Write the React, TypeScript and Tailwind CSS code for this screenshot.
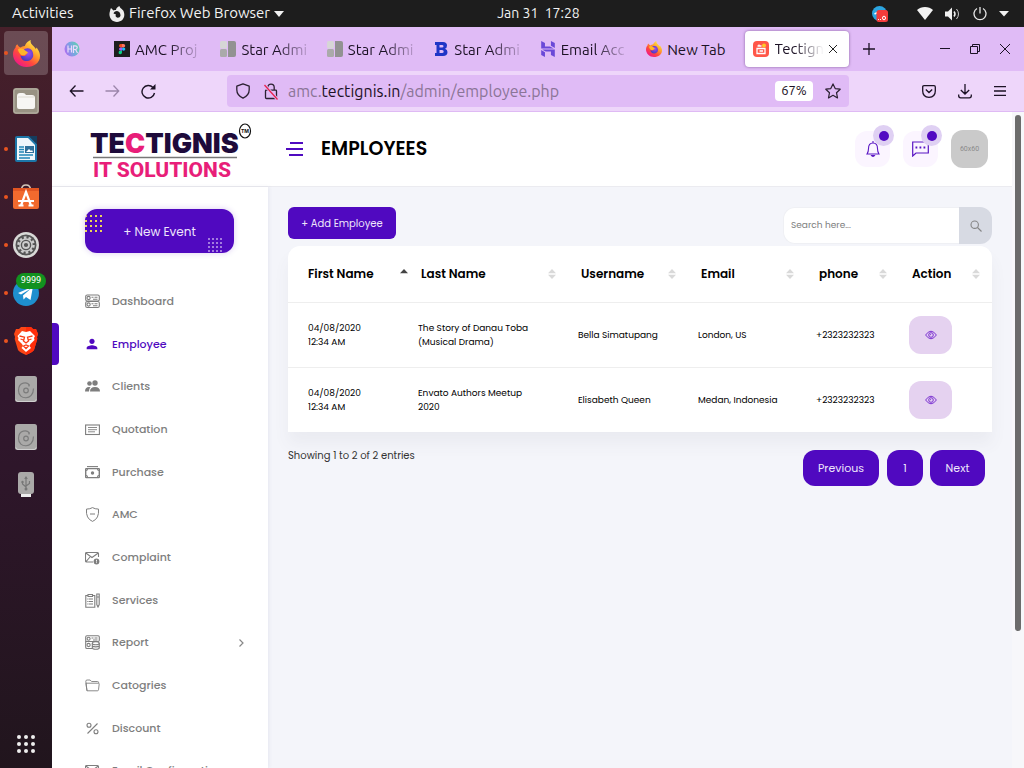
import type { ReactNode } from "react";
import { MdPerson } from "react-icons/md";
import { SiHostinger } from "react-icons/si";

const chromeFont = "font-['Ubuntu','Noto_Sans',sans-serif]";

function FirefoxLogo({ className }: { className: string }) {
  return (
    <svg viewBox="0 0 32 32" className={className} aria-hidden="true">
      <defs>
        <linearGradient id="ff-body" x1="0.85" y1="0.1" x2="0.2" y2="0.95">
          <stop offset="0" stopColor="#fff04a" />
          <stop offset="0.35" stopColor="#ffa02c" />
          <stop offset="0.65" stopColor="#ff4a3d" />
          <stop offset="1" stopColor="#f0158c" />
        </linearGradient>
        <radialGradient id="ff-core" cx="0.6" cy="0.4" r="0.6">
          <stop offset="0" stopColor="#a04df0" />
          <stop offset="1" stopColor="#4b3cc0" />
        </radialGradient>
      </defs>
      <path d="M5 5C6 7 7 8 9 9c1-1 3-2 5-2 1-3 4-6 7-7-1 3 1 5 4 8 1 1 2 2 2 3l1-2c3 4 4 7 4 10 0 8-7 13-16 13S0 25 0 17c0-3 1-6 3-8 0-2 1-3 2-4z" fill="url(#ff-body)" />
      <path d="M16 10c5-1 8 3 8 8 0 4-4 7-8 7s-7-3-7-7c3 2 6 1 8-2-2-1-4-1-6-3 1-2 3-3 5-3z" fill="url(#ff-core)" />
      <path d="M6 11c3-2 6-1 8 1 2 1 3 2 4 3-3 1-3 4-8 3-2-2-4-4-4-7z" fill="#ffb52b" />
    </svg>
  );
}

function FirefoxMono() {
  return (
    <svg viewBox="0 0 16 16" className="size-4" aria-hidden="true">
      <path fill="#eee" fillRule="evenodd" d="M2 2l2.500 2.500C5.500 4 6 4 7 4c0-1.500 1.500-3.500 3.500-4 0 2 3 3 4 5 2.500 6-1 11-6.500 11S-1 11 1 5c.2-1 .5-2 1-3zM8 5C6 5 5 6 4.500 7.500L7 8.500C5 12 11 13 11.500 9.500 11.700 7.500 10 5 8 5z" />
    </svg>
  );
}

function TopBar() {
  return (
    <header className="grid h-[27px] shrink-0 grid-cols-[1fr_auto_1fr] items-center bg-[#1d1d1d] text-[15px] text-[#f2f2f2]">
      <div className="flex items-center pl-3">
        <button className="w-[97px] text-left">Activities</button>
        <button className="flex items-center gap-1">
          <FirefoxMono />
          Firefox Web Browser
          <svg viewBox="0 0 10 6" className="h-[6px] w-[10px]" aria-hidden="true"><path d="M0 0h10L5 6z" fill="#f2f2f2" /></svg>
        </button>
      </div>
      <time className="pl-[53px] text-[14px] whitespace-pre">Jan 31  17:28</time>
      <div className="flex items-center justify-end pr-[15px]">
        <svg viewBox="0 0 16 16" className="mr-[29px] size-4" aria-hidden="true">
          <circle cx="7.500" cy="7.500" r="7.500" fill="#2ca5e0" />
          <path d="M2.500 8l3-1.500" stroke="#fff" strokeWidth="1.500" />
          <rect x="4.500" y="4" width="11.500" height="12" rx="2.500" fill="#f33b3b" />
          <path d="M6 13.500h1m1 0h1" stroke="#fff" />
          <ellipse cx="12" cy="12" rx="1.500" ry="1.800" fill="none" stroke="#fff" />
        </svg>
        <svg viewBox="0 0 16 13" className="mr-3 h-[13px] w-4" aria-hidden="true"><path d="M8 13L0 3C4-1 12-1 16 3z" fill="#f2f2f2" /></svg>
        <svg viewBox="0 0 16 14" className="mr-3 h-[14px] w-4" fill="none" stroke="#f2f2f2" aria-hidden="true">
          <path d="M0 4.500h3L7 .5v13l-4-4H0z" fill="#f2f2f2" stroke="none" />
          <path d="M9 4.500q2 2.500 0 5" strokeWidth="1.500" />
          <path d="M11.500 2q4 5 0 10" stroke="#ccc" />
        </svg>
        <svg viewBox="0 0 14 14" className="mr-3 size-[14px]" fill="none" stroke="#e8e8e8" strokeWidth="1.300" aria-hidden="true">
          <path d="M7 0v6.500M4 1.500a6 6 0 1 0 6 0" />
        </svg>
        <svg viewBox="0 0 10 6" className="h-[6px] w-[10px]" aria-hidden="true"><path d="M0 0h10L5 5.500z" fill="#f2f2f2" /></svg>
      </div>
    </header>
  );
}

function DriveIcon() {
  return (
    <svg viewBox="0 0 22 26" className="h-[26px] w-[22px]" aria-hidden="true">
      <rect width="22" height="26" rx="2.500" fill="#aaa9a8" />
      <path d="M1 23.500q0 2 2 2h16q2 0 2-2" stroke="#d0d0d0" fill="none" />
      <g fill="none" stroke="#7c7c7c" strokeWidth="1.200">
        <path d="M18.500 12.500c0 12-15 12-15 2 0-9 9-9 11-5" />
        <path d="M14 10.500v-2" />
        <circle cx="11" cy="14.500" r="2.300" />
      </g>
    </svg>
  );
}

const dock: { name: string; running?: boolean; active?: boolean; badge?: string; icon: ReactNode }[] = [
  { name: "Firefox", running: true, active: true, icon: <FirefoxLogo className="size-[27px]" /> },
  {
    name: "Files",
    icon: (
      <svg viewBox="0 0 26 26" className="size-[26px]" aria-hidden="true">
        <rect width="26" height="26" rx="3" fill="#989283" />
        <rect x="1" y="1" width="24" height="24" rx="2" fill="none" stroke="#bab5a8" />
        <path d="M4 8q0-3 3-3h3q2 0 3 2h6q3 0 3 3v9q0 2-2 2H6q-2 0-2-2z" fill="#f7f6f3" />
        <path d="M5 9h16" stroke="#dedbd2" />
      </svg>
    ),
  },
  {
    name: "Writer",
    running: true,
    icon: (
      <svg viewBox="0 0 22 26" className="h-[26px] w-[22px]" aria-hidden="true">
        <path d="M2 0h12l8 8v16q0 2-2 2H2q-2 0-2-2V2q0-2 2-2z" fill="#1c76a8" />
        <path d="M14 0h8v8z" fill="#153d5e" />
        <path d="M2 2h11l7 7v15H2z" fill="#eef6fb" />
        <path d="M4 11h5M4 13.500h5M4 16h5M4 19h14M4 22h11" stroke="#2087b8" strokeWidth="1.400" />
        <path d="M10 10h9v7h-9z" fill="#2e6f9a" />
        <path d="M11 16l3-3 2 2 1-1 1 2z" fill="#fff" />
      </svg>
    ),
  },
  {
    name: "Software",
    running: true,
    icon: (
      <svg viewBox="0 0 26 26" className="size-[26px]" aria-hidden="true">
        <path d="M8.500 6q0-5 4.500-5t4.500 5" fill="none" stroke="#d4c8bb" strokeWidth="1.500" />
        <path d="M0 4h26v19q0 2-2 2H2q-2 0-2-2z" fill="#f26a2e" />
        <path d="M0 4h26v3H0z" fill="#e15522" />
        <path d="M8 21.500L13 8l5 13.500M5 17h16M5.500 21.500h5M15.500 21.500h5" fill="none" stroke="#fff" strokeWidth="2.200" />
      </svg>
    ),
  },
  {
    name: "Settings",
    running: true,
    icon: (
      <svg viewBox="0 0 26 26" className="size-[26px]" fill="none" aria-hidden="true">
        <circle cx="13" cy="13" r="13" fill="#d9d9d7" />
        <circle cx="13" cy="13" r="10.500" fill="#555" />
        <circle cx="13" cy="13" r="7.500" stroke="#ccc" strokeWidth="2.500" strokeDasharray="2.600 2.110" />
        <circle cx="13" cy="13" r="6" stroke="#ccc" strokeWidth="1.500" />
        <circle cx="13" cy="13" r="3" stroke="#ccc" strokeWidth="1.800" />
      </svg>
    ),
  },
  {
    name: "Telegram",
    running: true,
    badge: "9999",
    icon: (
      <svg viewBox="0 0 26 26" className="size-[26px]" aria-hidden="true">
        <circle cx="13" cy="13" r="13" fill="#1e8fce" />
        <path d="M5 13L20 6.500 17.500 20l-4.500-3-2.500 2.500-.5-4 8-7-10 6z" fill="#fff" />
      </svg>
    ),
  },
  {
    name: "Brave",
    running: true,
    icon: (
      <svg viewBox="0 0 24 28" className="h-[28px] w-[24px]" aria-hidden="true">
        <path d="M7 0h10l2 2h3l2 5-1 3 .3 2L20 23q-1 2-8 5-7-3-8-5L.7 12 1 10 0 7l2-5h3z" fill="#fa4616" />
        <path d="M12 0h5l2 2h3l2 5-1 3 .3 2L20 23q-1 2-8 5z" fill="#ff2d0b" />
        <path d="M8 4l4 1 4-1 5 5-1 2 .5 2-4 4-1 2 1.500 2L12 25l-4.500-4L9 19l-1-2-4-4 .5-2L3.500 9z" fill="#fff" />
        <path d="M5.500 9l5 1.200L9.500 14 12 16l2.500-2-1-3.800 5-1.200M6.500 12l3 1m8-1l-3 1M9.500 19l2.500-1 2.500 1-2.500 2.500z" fill="none" stroke="#fa3c14" strokeWidth="1.300" />
      </svg>
    ),
  },
  { name: "Disk 1", icon: <DriveIcon /> },
  { name: "Disk 2", icon: <DriveIcon /> },
  {
    name: "USB drive",
    icon: (
      <svg viewBox="0 0 16 26" className="h-[26px] w-4" aria-hidden="true">
        <path d="M3 20h10v5H3z" fill="#eee" />
        <rect width="16" height="22" rx="3" fill="#aaa9a8" />
        <g fill="none" stroke="#777" strokeWidth="1.200"><path d="M8 5v13M4.500 10v2L8 15M11.500 9v2.500L8 14" /></g>
        <path d="M6.200 7L8 4l1.800 3z" fill="#777" />
        <circle cx="8" cy="17" r="1.500" fill="#777" /><circle cx="4.500" cy="10" r="1.200" fill="#777" />
      </svg>
    ),
  },
];

function Dock() {
  return (
    <nav aria-label="Dock" className="flex w-[52px] shrink-0 flex-col bg-linear-to-b from-[#47202a] via-[#31162d] to-[#21151d] pt-0.5">
      {dock.map((d) => (
        <button key={d.name} aria-label={d.name} className="relative flex h-12 w-full shrink-0 items-center justify-center">
          {d.active && <span className="absolute inset-x-1 inset-y-0.5 rounded bg-white/20" />}
          {d.running && <span className="absolute left-1 size-1 rounded-full bg-[#e95420]" />}
          <span className="relative">{d.icon}</span>
          {d.badge && (
            <span className="absolute top-1 left-4 flex h-4 w-[30px] items-center justify-center rounded-full bg-[#12921f] font-['DejaVu_Sans',sans-serif] text-[8px] text-white">
              {d.badge}
            </span>
          )}
        </button>
      ))}
      <button aria-label="Show applications" className="mx-auto mt-auto mb-[15px]">
        <svg viewBox="0 0 18 18" className="size-[18px]" fill="#eee" aria-hidden="true">
          {[2, 9, 16].map((y) => [2, 9, 16].map((x) => <circle key={`${x}-${y}`} cx={x} cy={y} r="2" />))}
        </svg>
      </button>
    </nav>
  );
}

const grayBlocks = (
  <svg viewBox="0 0 16 16" className="size-4" aria-hidden="true">
    <rect width="7" height="7.500" rx="1.500" fill="#d6d6d6" /><rect y="8" width="7" height="8" rx="1.500" fill="#aaa" />
    <path d="M8 0h6q2 0 2 2v12q0 2-2 2H8z" fill="#929292" />
  </svg>
);

const tabs: { label: string; fades?: boolean; icon: ReactNode }[] = [
  {
    label: "AMC Proj",
    fades: true,
    icon: (
      <svg viewBox="0 0 16 16" className="size-4" aria-hidden="true">
        <path d="M0 0h16v16H0z" fill="#1e1e1e" />
        <path d="M8 3H6.700a1.700 1.700 0 0 0 0 3.400H8z" fill="#f24e1e" /><path d="M8 3h1.500a1.700 1.700 0 0 1 0 3.400H8z" fill="#ff7262" />
        <path d="M8 6.400H6.700a1.700 1.700 0 0 0 0 3.400H8z" fill="#a259ff" /><circle cx="9.600" cy="8.100" r="1.700" fill="#1abcfe" />
        <path d="M8 9.800H6.700a1.700 1.700 0 1 0 1.300 1.700z" fill="#0acf83" />
      </svg>
    ),
  },
  { label: "Star Admi", fades: true, icon: grayBlocks },
  { label: "Star Admi", fades: true, icon: grayBlocks },
  {
    label: "Star Admi",
    fades: true,
    icon: (
      <svg viewBox="0 0 16 16" className="size-4" aria-hidden="true">
        <path fillRule="evenodd" fill="#1f35c7" d="M2 1h8q4 0 4 3.500 0 2.500-2 3.200 2.500.8 2.500 3.300 0 4-4.500 4H2v-3h1.500V4H2zM6.500 4v2.500H9q1.500 0 1.500-1.200T9 4zm0 5v3H9q1.700 0 1.700-1.500T9 9z" />
      </svg>
    ),
  },
  { label: "Email Acc", fades: true, icon: <SiHostinger className="size-4 text-[#6a49d8]" /> },
  { label: "New Tab", icon: <FirefoxLogo className="size-4" /> },
];

function TabStrip() {
  return (
    <div className="flex h-11 shrink-0 items-center bg-[#e0bbf6] text-[15px] text-[#1c1225]">
      <button aria-label="Pinned tab" className="flex w-[52px] pl-3">
        <svg viewBox="0 0 16 16" className="size-4 opacity-70" aria-hidden="true">
          <defs><linearGradient id="hr" x1="0" y1="0.700" x2="1" y2="0.300"><stop offset="0" stopColor="#9a4cf0" /><stop offset="0.500" stopColor="#4d9fd8" /><stop offset="1" stopColor="#2bdc90" /></linearGradient></defs>
          <circle cx="8" cy="8" r="7.500" fill="url(#hr)" />
          <path d="M4 4.500v7M7.500 4.500v7M4 8h3.500M9.500 12V4.800h1.700q2 0 2 1.800t-2 1.900H9.500m2 0l2 3.500" fill="none" stroke="#f4e6ff" strokeWidth="1.200" />
        </svg>
      </button>
      <div role="tablist" className="grid min-w-0 flex-1 grid-cols-7 self-stretch">
        {tabs.map((t, i) => (
          <button key={i} role="tab" aria-selected={false} className="flex min-w-0 items-center gap-[5px] pt-0.5 pl-2.5">
            <span className="shrink-0 pb-0.5">{t.icon}</span>
            <span className={t.fades ? "whitespace-nowrap mask-r-from-55% mask-r-to-110%" : "whitespace-nowrap"}>{t.label}</span>
          </button>
        ))}
        <div className="flex min-w-0 py-1 pl-0.5">
          <div role="tab" aria-selected className="flex min-w-0 flex-1 items-center rounded bg-white pr-3 pl-2 shadow-[0_0_3px_rgba(60,20,90,.55)]">
            <svg viewBox="0 0 16 16" className="mr-1.5 size-4 shrink-0" aria-hidden="true">
              <rect width="16" height="16" rx="4" fill="#ff5748" />
              <path d="M4.500 5h4M4 7.500h8v5H4zM6 3.500v2M6.500 10H10" fill="none" stroke="#fff" strokeWidth="1.300" />
              <circle cx="11" cy="4.500" r="2" fill="#ffc928" />
            </svg>
            <span className="flex-1 whitespace-nowrap"><span className="mask-r-from-40%">Tectign</span></span>
            <button aria-label="Close tab">
              <svg viewBox="0 0 8 8" className="size-2" stroke="#222" aria-hidden="true"><path d="M0 0l8 8M8 0L0 8" /></svg>
            </button>
          </div>
        </div>
      </div>
      <div className="flex w-[175px] shrink-0 items-center justify-between px-[14px]">
        <button aria-label="New tab"><svg viewBox="0 0 12 12" className="size-3" stroke="#1c1225" strokeWidth="1.300" aria-hidden="true"><path d="M6 0v12M0 6h12" /></svg></button>
        <div className="flex items-center gap-5">
          <button aria-label="Minimize"><svg viewBox="0 0 10 10" className="size-2.5" stroke="#1c1225" aria-hidden="true"><path d="M0 4.500h10" /></svg></button>
          <button aria-label="Restore"><svg viewBox="0 0 10 10" className="size-2.5" stroke="#1c1225" fill="none" aria-hidden="true"><path d="M.5 2.500h7v7h-7zM2.500 2.500v-2h7v7h-2" /></svg></button>
          <button aria-label="Close window"><svg viewBox="0 0 10 10" className="size-2.5" stroke="#1c1225" aria-hidden="true"><path d="M0 0l10 10M10 0L0 10" /></svg></button>
        </div>
      </div>
    </div>
  );
}

function AddressBar() {
  return (
    <div className="flex h-[41px] shrink-0 items-center border-b border-[#dfbaf4] bg-[#eed6fa] text-[#1c1225]">
      <div className="flex w-[175px] shrink-0 items-center gap-[21px] pl-[17px]">
        <button aria-label="Back"><svg viewBox="0 0 14 12" className="h-3 w-[15px]" fill="none" stroke="#1c1225" strokeWidth="1.300" aria-hidden="true"><path d="M14 6H1M6 .5L.8 6 6 11.500" /></svg></button>
        <button aria-label="Forward"><svg viewBox="0 0 14 12" className="h-3 w-[15px]" fill="none" stroke="#9c86ab" strokeWidth="1.300" aria-hidden="true"><path d="M0 6h13M8 .5L13.200 6 8 11.500" /></svg></button>
        <button aria-label="Reload"><svg viewBox="0 0 15 15" className="size-[15px]" fill="none" stroke="#1c1225" strokeWidth="1.400" aria-hidden="true"><path d="M13.500 9A6.300 6.300 0 1 1 12 3.500" /><path d="M14.500 0v5.500H9z" fill="#1c1225" stroke="none" /></svg></button>
      </div>
      <div className="flex h-8 min-w-0 flex-1 items-center rounded bg-[#e0bbf6] pr-2 pl-[9px]">
        <svg viewBox="0 0 14 16" className="h-4 w-[14px] shrink-0" fill="none" stroke="#2b2031" strokeWidth="1.300" aria-hidden="true"><path d="M7 .8l6.200 2.400v3.600c0 4-2.700 6.800-6.200 8.400C3.500 13.600.8 10.800.8 6.800V3.200z" strokeLinejoin="round" /></svg>
        <svg viewBox="0 0 14 17" className="mx-[14px] mr-2.5 h-[17px] w-[14px] shrink-0" fill="none" aria-hidden="true">
          <path d="M1.500 8q0-.8.8-.8h9.400q.8 0 .8.8v6.500q0 1-1 1h-9q-1 0-1-1zM3.800 7V4.300a3.200 3.200 0 0 1 6.400 0V7" stroke="#2b2031" strokeWidth="1.300" />
          <path d="M.5 2l13 14.500" stroke="#e0bbf6" strokeWidth="3" /><path d="M.5 2l13 14.500" stroke="#e8234f" strokeWidth="1.300" />
        </svg>
        <div className="min-w-0 flex-1 overflow-hidden text-[16px] whitespace-nowrap text-[#8b7597]">amc.<span className="text-[#1c1225]">tectignis.in</span>/admin/employee.php</div>
        <button className="h-5 w-[38px] rounded-sm bg-white text-[13px]">67%</button>
        <button aria-label="Bookmark" className="ml-3"><svg viewBox="0 0 16 16" className="size-4" fill="none" stroke="#2b2031" strokeWidth="1.200" strokeLinejoin="round" aria-hidden="true"><path d="M8 .9l2.200 4.700 5 .6-3.700 3.500 1 5.200L8 12.300l-4.500 2.600 1-5.200L.8 6.200l5-.6z" /></svg></button>
      </div>
      <div className="flex w-[175px] shrink-0 items-center justify-end gap-[22px] pr-[18px]">
        <button aria-label="Pocket"><svg viewBox="0 0 14 13" className="h-[13px] w-[14px]" fill="none" stroke="#1c1225" strokeWidth="1.300" aria-hidden="true"><path d="M2 .7h10q1.300 0 1.300 1.300v4q0 6-6.300 6.300Q.7 12 .7 6V2Q.7.7 2 .7zM3.800 4.500L7 7.500l3.200-3" /></svg></button>
        <button aria-label="Downloads"><svg viewBox="0 0 14 16" className="h-4 w-[14px]" fill="none" stroke="#1c1225" strokeWidth="1.300" aria-hidden="true"><path d="M7 1v10M2.800 7L7 11l4.200-4M.7 11.500v1.300q0 2 2 2h8.600q2 0 2-2v-1.300" /></svg></button>
        <button aria-label="Menu"><svg viewBox="0 0 12 10" className="h-[10px] w-3" stroke="#1c1225" strokeWidth="1.300" aria-hidden="true"><path d="M0 .7h12M0 5h12M0 9.300h12" /></svg></button>
      </div>
    </div>
  );
}

function Logo() {
  return (
    <svg viewBox="0 0 164 68" className="h-[68px] w-[164px]" role="img" aria-label="Tectignis IT Solutions">
      <text x="0" y="38" fontFamily="Inter, sans-serif" fontWeight="900" fontSize="27" fill="#1e0b3b">TE<tspan fill="#e81e79">C</tspan>TIGNIS</text>
      <path d="M3 42.500h144" stroke="#777" strokeWidth="1.500" />
      <text x="3" y="62" fontFamily="Roboto, sans-serif" fontWeight="800" fontSize="21" fill="#e81e79">IT SOLUTIONS</text>
      <ellipse cx="155" cy="16" rx="5.500" ry="7" fill="none" stroke="#111" strokeWidth="1.200" />
      <text x="155" y="18" textAnchor="middle" fontFamily="Inter, sans-serif" fontWeight="700" fontSize="5" fill="#111">TM</text>
    </svg>
  );
}

function PageHeader() {
  return (
    <header className="flex h-[75px] shrink-0 items-center border-b border-[#ebebf0] bg-white">
      <a href="#home" className="flex w-[234px] shrink-0 pl-[38px]"><Logo /></a>
      <button aria-label="Toggle sidebar"><svg viewBox="0 0 18 16" className="h-4 w-[18px]" stroke="#4f0ac0" strokeWidth="2" aria-hidden="true"><path d="M4 2h13M0 8h17M3 14h14" /></svg></button>
      <h1 className="ml-[17px] flex-1 text-[19px] font-semibold text-black">EMPLOYEES</h1>
      <div className="flex items-center gap-[13px] pr-6">
        <button aria-label="Notifications" className="relative flex h-9 w-[35px] items-center justify-center rounded-xl bg-[#fbf5ff]">
          <svg viewBox="0 0 14 16" className="h-4 w-[14px]" fill="none" stroke="#5a16c4" strokeWidth="1.100" aria-hidden="true"><path d="M7 0v1.500M1 13q1.500-2 1.500-5.500Q2.500 2 7 2t4.500 5.500Q11.500 11 13 13z" /><path d="M4.500 14h5q-2.500 4-5 0z" fill="#5a16c4" stroke="none" /></svg>
          <span className="absolute -top-1.5 -right-1 flex size-[21px] items-center justify-center rounded-full bg-[#dfd0f3]"><span className="size-2.5 rounded-full bg-[#5209c2]" /></span>
        </button>
        <button aria-label="Messages" className="relative flex h-9 w-[35px] items-center justify-center rounded-xl bg-[#fbf5ff]">
          <svg viewBox="0 0 17 16" className="h-4 w-[17px]" fill="none" stroke="#5a16c4" strokeWidth="1.200" aria-hidden="true"><path d="M.7 15V1h15.600v11H4z" /><path d="M3.500 6.500h1.800m2.200 0h1.800m2.200 0h1.800" strokeWidth="1.800" /></svg>
          <span className="absolute -top-1.5 -right-1 flex size-[21px] items-center justify-center rounded-full bg-[#dfd0f3]"><span className="size-2.5 rounded-full bg-[#5209c2]" /></span>
        </button>
        <button className="h-[38px] w-[37px] rounded-xl bg-[#cacaca] font-['Roboto',sans-serif] text-[7px] text-[#8a8a8a]">60x60</button>
      </div>
    </header>
  );
}

function Stroke({ children }: { children: ReactNode }) {
  return <svg viewBox="0 0 15 15" className="size-[15px]" fill="none" stroke="currentColor" strokeWidth="1.100" aria-hidden="true">{children}</svg>;
}

const envelope = <Stroke><path d="M13.500 7V3.500q0-1-1-1H1.500q-1 0-1 1V11q0 1 1 1H8M.8 3l6.200 4.500L13.300 3M.8 11.800L5 7" /><circle cx="11.500" cy="11.500" r="2.900" fill="currentColor" stroke="none" /><path d="M11.500 9.800v1.800m0 .7v.8" stroke="#fff" strokeWidth="0.900" /></Stroke>;

const menu: { label: string; icon: ReactNode; arrow?: boolean }[] = [
  { label: "Dashboard", icon: <Stroke><rect x="0.700" y="1" width="13.600" height="6" rx="1.500" /><rect x="0.700" y="7.500" width="13.600" height="6" rx="1.500" /><circle cx="3.600" cy="4" r="1.600" /><circle cx="3.600" cy="10.500" r="1.600" /><path d="M6.500 3.200h2m1 0h3M8 5.200h4.500M6.500 9.700h2m1 0h3M8 11.700h4.500" /></Stroke> },
  { label: "Employee", icon: <MdPerson className="size-4" /> },
  { label: "Clients", icon: <Stroke><g fill="currentColor" stroke="none"><circle cx="4.500" cy="4.500" r="2.300" /><circle cx="10" cy="4" r="2.700" /><path d="M0 12.500q0-4.500 4-4.500l1.500.3Q4 9.500 4 12.500zM5 12.500Q5 8 10 8t5 4.500z" /></g></Stroke> },
  { label: "Quotation", icon: <Stroke><rect x="0.600" y="3" width="13.800" height="9.500" /><path d="M3 5.500h9M3 7.700h9M3 9.800h7" strokeWidth="0.900" /></Stroke> },
  { label: "Purchase", icon: <Stroke><rect x="0.700" y="3.600" width="13.600" height="9" rx="0.500" strokeWidth="1.400" /><path d="M2 1.600h11" /><circle cx="7.500" cy="8" r="1.700" fill="currentColor" stroke="none" /><path d="M1 5.500q1.500 0 1.500-1.500M1 10.500q1.500 0 1.500 1.500M14 5.500q-1.500 0-1.500-1.500M14 10.500q-1.500 0-1.500 1.500" /></Stroke> },
  { label: "AMC", icon: <Stroke><path d="M7.500 .6q2.500 1.500 6 1.500.9 9.500-6 12.300Q.6 11.500 1.500 2.100 5 2.100 7.500.6zM5 7h5" strokeWidth="1" /></Stroke> },
  { label: "Complaint", icon: envelope },
  { label: "Services", icon: <Stroke><path d="M3 2.500H.8v11.700h9V2.500H7.500M3 1.500h4.500v2H3zM3.500 6H8M3.500 8.500H8M3.500 11H8M2 6h.7M2 8.500h.7M2 11h.7M11.800 1h2.400v10.500L13 14l-1.200-2.500zM11.800 4h2.400" /></Stroke> },
  { label: "Report", arrow: true, icon: <Stroke><rect x="0.700" y="0.800" width="13.600" height="5.700" rx="1.200" /><path d="M7 13.500H2q-1.300 0-1.300-1.300V6.500H7" /><circle cx="3.600" cy="3.700" r="1.500" /><circle cx="3.600" cy="10" r="1.600" /><path d="M6.500 3h2m1 0h3M8 5h4.500" /><ellipse cx="10.800" cy="8.200" rx="3.500" ry="1.500" /><path d="M7.300 8.200v4.500c0 2 7 2 7 0V8.200M7.300 10.500c0 1.800 7 1.800 7 0" /></Stroke> },
  { label: "Catogries", icon: <Stroke><path d="M2 12.800Q1.200 8 .8 3.300q0-1.300 1.300-1.300h3l1.500 1.500h6q1 0 1 1v.7M1 5.200h12.500q.8 0 .7.900l-.7 5.700q-.1 1-1.100 1H2z" strokeWidth="0.900" /></Stroke> },
  { label: "Discount", icon: <Stroke><circle cx="4" cy="4.300" r="2" /><circle cx="11" cy="10.700" r="2" /><path d="M12.500 2.500l-10 10" /></Stroke> },
  { label: "Email Configuration", icon: envelope },
];

function Sidebar() {
  return (
    <aside className="flex w-[216px] shrink-0 flex-col overflow-hidden bg-white shadow-[1px_0_4px_rgba(60,60,120,.08)]">
      <button className="relative mt-[22px] ml-[33px] h-11 w-[149px] shrink-0 overflow-hidden rounded-xl bg-[#5009c0] pt-px text-[12px] text-[#eee5fb] shadow-[0_0_6px_rgba(80,9,192,.2)]">
        <svg viewBox="0 0 18 18" className="absolute top-1.5 left-0 size-[18px]" fill="#ecd35c" aria-hidden="true">
          {[0, 5, 10, 15].map((y) => [0, 5, 10, 15].map((x) => <rect key={`${x}-${y}`} x={x} y={y} width="2" height="2" />))}
        </svg>
        + New Event
        <svg viewBox="0 0 15 15" className="absolute right-[11px] bottom-0 size-[15px]" fill="#a37bdf" aria-hidden="true">
          {[0, 4, 8, 12].map((y) => [0, 4, 8, 12].map((x) => <rect key={`${x}-${y}`} x={x} y={y} width="2" height="2" />))}
        </svg>
      </button>
      <ul className="mt-[27px] flex h-[512px] shrink-0 flex-col text-[11px] font-medium text-[#7e7e7e]">
        {menu.map((m) => {
          const active = m.label === "Employee";
          return (
            <li key={m.label} className="flex flex-1">
              <a href={`#${m.label}`} className={active ? "relative flex flex-1 items-center pl-8 text-[#5009c0]" : "flex flex-1 items-center pl-8"}>
                {active && <span className="absolute inset-y-0 left-0 w-[7px] rounded-r bg-[#5009c0]" />}
                <span className="flex w-4 justify-center">{m.icon}</span>
                <span className="ml-3 flex-1">{m.label}</span>
                {m.arrow && <svg viewBox="0 0 5 8" className="mr-6 h-2 w-[5px]" fill="none" stroke="#888" strokeWidth="1.200" aria-hidden="true"><path d="M.5.5L4 4 .5 7.500" /></svg>}
              </a>
            </li>
          );
        })}
      </ul>
    </aside>
  );
}

const columns = [
  { label: "First Name", col: "w-[120px] pl-5", sorted: true },
  { label: "Last Name", col: "w-[160px] pl-[13px]" },
  { label: "Username", col: "w-[120px] pl-[13px]" },
  { label: "Email", col: "w-[118px] pl-[13px]" },
  { label: "phone", col: "w-[93px] pl-[13px]" },
  { label: "Action", col: "w-[93px] pl-[13px]" },
];

const rows = [
  { date: ["04/08/2020", "12:34 AM"], title: ["The Story of Danau Toba", "(Musical Drama)"], user: "Bella Simatupang", place: "London, US", phone: "+2323232323" },
  { date: ["04/08/2020", "12:34 AM"], title: ["Envato Authors Meetup", "2020"], user: "Elisabeth Queen", place: "Medan, Indonesia", phone: "+2323232323" },
];

function SearchIcon() {
  return (
    <svg viewBox="0 0 12 12" className="size-3" fill="none" stroke="currentColor" strokeWidth="1.100" aria-hidden="true">
      <circle cx="4.700" cy="4.700" r="3.700" /><path d="M7.500 7.500l4 4" />
    </svg>
  );
}

function EyeIcon() {
  return (
    <svg viewBox="0 0 12 10" className="h-2.5 w-3" fill="none" stroke="currentColor" aria-hidden="true">
      <path d="M.6 5Q6-2.600 11.400 5 6 12.600.6 5z" /><circle cx="6" cy="5" r="2.300" />
      <path d="M5.200 5.200q.1-.9.900-.9" />
    </svg>
  );
}

function Employees() {
  return (
    <main className="min-w-0 flex-1 px-5 pt-5">
      <div className="flex items-start justify-between">
        <button className="h-8 w-[108px] rounded-md bg-[#5009c0] text-[10px] text-[#eee5fb]">+ Add Employee</button>
        <form className="flex h-[37px] w-[209px]">
          <input aria-label="Search" placeholder="Search here..." className="min-w-0 flex-1 rounded-l-xl border border-r-0 border-[#eff0f4] bg-white px-[7px] text-[9px] outline-none placeholder:text-[#7d7d7d]" />
          <button type="button" aria-label="Search" className="flex w-[33px] items-center justify-center rounded-r-xl bg-[#d7dae3] text-[#858585]"><SearchIcon /></button>
        </form>
      </div>
      <table className="mt-0.5 w-full table-fixed overflow-hidden rounded-t-xl bg-white text-left text-[9px] text-black shadow-[0_12px_16px_rgba(80,80,110,.06)]">
        <thead>
          <tr className="h-14 border-b border-[#eeeeee] text-[12px]">
            {columns.map((c) => (
              <th key={c.label} scope="col" className={c.col}>
                <button className={c.sorted ? "flex w-full items-center justify-between" : "flex w-full items-center justify-between pr-3"}>
                  <span className="font-semibold">{c.label}</span>
                  <svg viewBox="0 0 8 10" className="h-2.5 w-2" aria-hidden="true">
                    <path d="M0 4.300L4 0l4 4.300z" fill={c.sorted ? "#444" : "#d9d9d9"} />
                    {!c.sorted && <path d="M0 5.700L4 10l4-4.300z" fill="#d9d9d9" />}
                  </svg>
                </button>
              </th>
            ))}
          </tr>
        </thead>
        <tbody>
          {rows.map((r) => (
            <tr key={r.user} className="h-[65px] border-b border-[#eeeeee] leading-[14px] last:border-b-0">
              <td className="pl-5">{r.date[0]}<br />{r.date[1]}</td>
              <td className="pl-2.5">{r.title[0]}<br />{r.title[1]}</td>
              <td className="pl-2.5">{r.user}</td>
              <td className="pl-2.5">{r.place}</td>
              <td className="pl-2.5">{r.phone}</td>
              <td className="pl-2.5"><button aria-label={`View ${r.user}`} className="flex h-[38px] w-[43px] items-center justify-center rounded-xl bg-[#e5d2f0] text-[#7a31d0]"><EyeIcon /></button></td>
            </tr>
          ))}
        </tbody>
      </table>
      <div className="mt-[18px] flex items-start justify-between pr-[7px]">
        <p className="text-[10px] leading-3 text-[#333]">Showing 1 to 2 of 2 entries</p>
        <div className="flex h-9 text-[11px] text-[#eee5fb]">
          <button className="w-[76px] rounded-xl bg-[#5009c0]">Previous</button>
          <button className="ml-2 w-9 rounded-xl bg-[#5009c0]">1</button>
          <button className="ml-[7px] w-[55px] rounded-xl bg-[#5009c0]">Next</button>
        </div>
      </div>
    </main>
  );
}

export default function App() {
  return (
    <div className={`flex h-screen flex-col overflow-hidden ${chromeFont}`}>
      <TopBar />
      <div className="flex min-h-0 flex-1">
        <Dock />
        <div className="flex min-w-0 flex-1 flex-col">
          <TabStrip />
          <AddressBar />
          <div className="flex min-h-0 flex-1 font-['Poppins','Inter',sans-serif]">
            <div className="flex min-w-0 flex-1 flex-col bg-[#f4f5fa]">
              <PageHeader />
              <div className="flex min-h-0 flex-1"><Sidebar /><Employees /></div>
            </div>
            <div className="w-3 shrink-0 bg-[#f7f7fa] px-[3px] pt-[3px]"><div className="h-[516px] rounded-full bg-[#6b6b6b]" /></div>
          </div>
        </div>
      </div>
    </div>
  );
}
